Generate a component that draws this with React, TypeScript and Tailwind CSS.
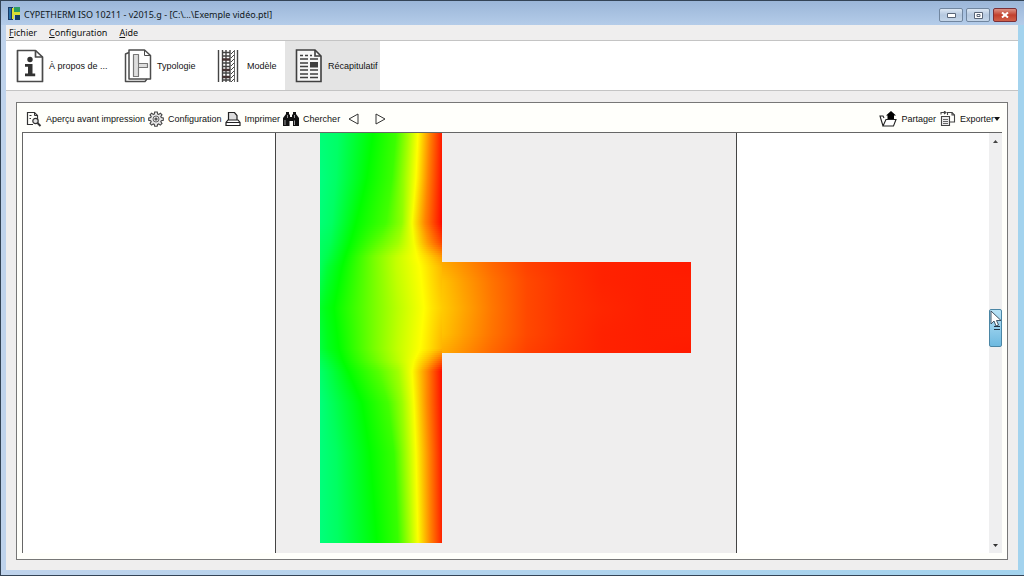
import React from "react";

type Stop = [x: number, hue: number];
type Profile = { y: number; stops: Stop[] };

/* Colour profiles across the wall, from the top edge to the bottom one. */
const WALL: Profile[] = [
  { y: 0, stops: [[0, 148], [18, 144], [53, 120], [76, 106], [88, 82], [98, 60], [110, 31], [122, 6]] },
  { y: 45, stops: [[0, 150], [16, 144], [47, 120], [72, 106], [84, 84], [96, 60], [108, 31], [122, 4]] },
  { y: 90, stops: [[0, 148], [12, 143], [36, 120], [66, 104], [82, 86], [92, 62], [105, 31], [122, 2]] },
  { y: 110, stops: [[0, 144], [10, 140], [30, 120], [58, 98], [78, 82], [94, 62], [108, 36], [122, 16]] },
  { y: 124, stops: [[0, 143], [8, 137], [25, 120], [54, 92], [76, 74], [97, 60], [108, 50], [122, 36]] },
  { y: 134, stops: [[0, 142], [7, 133], [22, 120], [54, 92], [76, 74], [100, 60], [110, 52], [122, 43]] },
  { y: 175, stops: [[0, 130], [6, 125], [14, 120], [54, 92], [78, 76], [104, 60], [112, 54], [122, 48]] },
  { y: 216, stops: [[0, 135], [8, 127], [19, 120], [54, 92], [78, 74], [100, 60], [110, 52], [122, 42]] },
  { y: 228, stops: [[0, 141], [10, 132], [23, 120], [54, 96], [78, 76], [94, 61], [108, 42], [122, 20]] },
  { y: 238, stops: [[0, 145], [12, 135], [28, 120], [58, 100], [78, 82], [92, 61], [107, 32], [122, 3]] },
  { y: 270, stops: [[0, 149], [14, 140], [42, 120], [68, 104], [82, 84], [94, 61], [107, 32], [122, 4]] },
  { y: 320, stops: [[0, 149], [16, 143], [50, 120], [74, 107], [85, 84], [96, 61], [109, 32], [122, 6]] },
  { y: 410, stops: [[0, 149], [18, 143], [57, 120], [78, 107], [88, 84], [98, 61], [110, 32], [122, 8]] },
];

/* Colour profiles along the slab that meets the wall. */
const SLAB: Profile[] = [
  { y: 0, stops: [[0, 40], [22, 33], [50, 24], [85, 15], [120, 11], [160, 8], [205, 7], [249, 6]] },
  { y: 20, stops: [[0, 46], [22, 37], [50, 27], [85, 17], [120, 12], [160, 8], [205, 7], [249, 7]] },
  { y: 46, stops: [[0, 48], [22, 39], [50, 28], [85, 17], [120, 12], [160, 9], [205, 7], [249, 7]] },
  { y: 72, stops: [[0, 46], [22, 37], [50, 27], [85, 17], [120, 12], [160, 8], [205, 7], [249, 7]] },
  { y: 92, stops: [[0, 40], [22, 33], [50, 24], [85, 15], [120, 11], [160, 8], [205, 7], [249, 6]] },
];

const BAND = 2;

function profileAt(profiles: Profile[], y: number): Stop[] {
  const next = Math.max(1, profiles.findIndex((p) => p.y >= y));
  const a = profiles[next - 1];
  const b = profiles[next];
  const t = (y - a.y) / (b.y - a.y);
  return a.stops.map(([x, h], i) => [x + (b.stops[i][0] - x) * t, h + (b.stops[i][1] - h) * t]);
}

function Field({ name, profiles, x, y, width, height }: { name: string; profiles: Profile[]; x: number; y: number; width: number; height: number }) {
  const bands = Array.from({ length: Math.ceil(height / BAND) }, (_, i) => i * BAND);
  return (
    <>
      {bands.map((top) => (
        <React.Fragment key={top}>
          <linearGradient id={`${name}-${top}`}>
            {profileAt(profiles, top + 1).map(([at, hue], i) => (
              <stop key={i} offset={at / width} stopColor={`hsl(${hue} 100% 50%)`} />
            ))}
          </linearGradient>
          <rect x={x} y={y + top} width={width} height={Math.min(BAND, height - top)} fill={`url(#${name}-${top})`} />
        </React.Fragment>
      ))}
    </>
  );
}

function ThermalMap() {
  return (
    <svg width="371" height="410" viewBox="0 0 371 410" role="img" aria-label="Températures" className="shrink-0">
      <Field name="wall" profiles={WALL} x={0} y={0} width={122} height={410} />
      <Field name="slab" profiles={SLAB} x={122} y={129} width={249} height={91} />
    </svg>
  );
}

function InfoIcon() {
  return (
    <svg width="28" height="36" viewBox="0 0 28 36" fill="none" stroke="#4a4a4a" strokeWidth="1.7" strokeLinejoin="round">
      <path d="M1.500 2.500h18l7 6.500v24.500h-25z" />
      <path d="M19.500 2.500v6.500h7" />
      <circle cx="14" cy="11.500" r="2.700" fill="#333" stroke="none" />
      <path d="M9 16h7.500v9.500h2.700v2.700H9v-2.700h3v-6.800H9z" fill="#333" stroke="none" />
    </svg>
  );
}

function TypologyIcon() {
  return (
    <svg width="28" height="36" viewBox="0 0 28 36" fill="none" stroke="#4c4c4c" strokeWidth="1.500" strokeLinejoin="round">
      <path d="M5 4.500L1.500 6v27.500H21l2-2.500" />
      <path d="M5 2h15.500l6 5.500V31H5z" />
      <path d="M20.500 2v5.500h6" strokeWidth="1" />
      <path d="M9.500 6.500h5v9h9v4h-9v9h-5z" fill="#dedede" stroke="#777" strokeWidth="1.200" />
      <path d="M14.500 15v5" stroke="#777" strokeWidth="1" />
    </svg>
  );
}

function ModelIcon() {
  return (
    <svg width="22" height="34" viewBox="0 0 22 34" fill="none" stroke="#444" strokeWidth="1.400">
      <path d="M1.500 1v32M5.500 1v32M20.500 1v32" />
      <path d="M9 1v32M13 1v32" />
      <path d="M17.500 1v32" strokeWidth=".8" />
      <path d="M5 3.500h8M5 7h8M5 14h8M5 17.500h8M5 24h8M5 31h8" />
      <path d="M5 10.500h8M5 21h8M5 28h8" stroke="#433" strokeWidth="2.400" />
      <path d="M14 5l3-3M14 9l3-3M14 13l3-3M14 17l3-3M14 21l3-3M14 25l3-3M14 29l3-3M14 33l3-3" strokeWidth="1" />
    </svg>
  );
}

function SummaryIcon() {
  return (
    <svg width="28" height="36" viewBox="0 0 28 36" fill="none" stroke="#3f3f3f" strokeWidth="1.600">
      <path d="M1.500 2H20l6 6v25.500H1.500z" fill="#f6f6f6" />
      <path d="M20 2v6h6" />
      <path d="M5 7.500h3M10 7.500h3M15 7.500h2M5 11h8M15 11h8M5 15h8M5 18.500h8M5 22h8M5 26h8M5 29.500h8M15 22h8M15 26h8M15 29.500h8" />
      <path d="M15 14h8v5.500h-8z" fill="#3f3f3f" stroke="none" />
    </svg>
  );
}

function PreviewIcon() {
  return (
    <svg width="16" height="16" viewBox="0 0 16 16" fill="none" stroke="#333" strokeWidth="1.200">
      <path d="M7 13.500H1.500v-12h7l3 3v4" />
      <path d="M8.500 1.500v3h3M3.500 4.500h2M3.500 7.500h1.500" strokeWidth="1" />
      <circle cx="9.500" cy="10" r="2.700" fill="#e4e4e4" />
      <path d="M11.500 12l3 3" strokeWidth="2" />
    </svg>
  );
}

function GearIcon() {
  return (
    <svg width="16" height="16" viewBox="0 0 16 16" fill="none" stroke="#444" strokeWidth="1.100">
      <path d="M6.700 1h2.600l.4 2 1 .4 1.700-1.200 1.600 1.600-1.200 1.800.5 1 2 .4v2.300l-2 .4-.5 1 1.200 1.800-1.700 1.600-1.700-1.200-1 .4-.4 2H6.700l-.4-2-1-.4-1.700 1.200L2 12.500l1.200-1.800-.5-1-2-.4V7l2-.4.5-1L2 3.800l1.600-1.600 1.700 1.200 1-.4z" fill="#e6e6e6" />
      <circle cx="8" cy="8" r="3" strokeWidth=".8" />
      <circle cx="8" cy="8" r="1" />
    </svg>
  );
}

function PrinterIcon() {
  return (
    <svg width="16" height="16" viewBox="0 0 16 16" fill="none" stroke="#222" strokeWidth="1.200">
      <path d="M3.500 9V1.500h6l2.500 3V9" fill="#ddd" />
      <path d="M3 9h10l2 2.500v3H1v-3zM1 11.500h14" fill="#fff" />
    </svg>
  );
}

function BinocularsIcon() {
  return (
    <svg width="16" height="16" viewBox="0 0 16 16" fill="#111">
      <path d="M3 1h3v2l1 1v2h2V4l1-1V1h3v2l3 4v8h-6v-5H6.500v5H0V7l3-4z" />
      <path d="M2 9v5M4.500 4v3M11.500 9.500V14M11.500 4v3" stroke="#bbb" strokeWidth=".8" />
    </svg>
  );
}

function ShareIcon() {
  return (
    <svg width="18" height="16" viewBox="0 0 18 16" fill="none" stroke="#222" strokeWidth="1.100">
      <path d="M4 15L1 5h3l1 2M4 15L7 8.500h10L14.500 15z" fill="#fff" />
      <path d="M12 0l5 4.500h-2V8H8.500V4.500H7z" fill="#000" stroke="none" />
    </svg>
  );
}

function ExportIcon() {
  return (
    <svg width="16" height="16" viewBox="0 0 16 16" fill="none" stroke="#444" strokeWidth="1.100">
      <path d="M7.500 4V1.500h4.500l2.500 2.500v7H10" />
      <path d="M12 1.500V4h2.500" />
      <path d="M1.500 5.500h8v9h-8z" fill="#eee" />
      <path d="M3 8.500h5M3 10.500h5M3 12.500h5" strokeWidth=".8" />
      <path d="M1 3.500V1.500h4M4 0l2 1.500L4 3" />
    </svg>
  );
}

function AppLogo() {
  return (
    <svg width="12" height="13" viewBox="0 0 12 13">
      <path d="M0 0h5v13H0z" fill="#183a68" />
      <path d="M1 1h2v11H1z" fill="#2870a8" />
      <path d="M6 0h6v6H6z" fill="#2a9b62" />
      <path d="M4 1h2v4h6v3H6v4H4z" fill="#d8df35" />
      <path d="M7 8h5v5H7z" fill="#153e63" />
    </svg>
  );
}

function MainTab({ icon, label, active, className }: { icon: React.ReactNode; label: string; active?: boolean; className: string }) {
  return (
    <button type="button" aria-pressed={!!active} className={`flex h-full items-center whitespace-nowrap ${active ? "bg-[#e4e4e4]" : ""} ${className}`}>
      {icon}
      <span>{label}</span>
    </button>
  );
}

function Tool({ icon, label, className = "" }: { icon: React.ReactNode; label: string; className?: string }) {
  return (
    <button type="button" className={`flex items-center gap-1 whitespace-nowrap ${className}`}>
      {icon}
      <span>{label}</span>
    </button>
  );
}

function TitleBar() {
  const box = "flex h-3.5 w-6 items-center justify-center rounded-xs border border-[#71869f] bg-linear-to-b from-[#dce7f3] via-[#b5c8df] to-[#c4d5e8]";
  return (
    <header className="flex h-6 shrink-0 items-center gap-1 bg-linear-to-b from-[#9bb6d8] to-[#b4cce9] pr-[7px] pl-[7px] font-['Noto_Sans',sans-serif] text-[9px] text-[#101820]">
      <AppLogo />
      <h1 className="flex-1 pt-1 whitespace-nowrap">CYPETHERM ISO 10211 - v2015.g - [C:\...\Exemple vidéo.ptl]</h1>
      <div className="flex gap-[3px] pt-1">
        <button type="button" aria-label="Réduire" className={box}>
          <svg width="9" height="5"><path d="M.5.5h8v4h-8z" fill="#fff" stroke="#5a6678" /></svg>
        </button>
        <button type="button" aria-label="Agrandir" className={box}>
          <svg width="9" height="7"><path d="M.5.5h8v6h-8zM3 2.500h3v2H3z" fill="#fff" stroke="#5a6678" /></svg>
        </button>
        <button type="button" aria-label="Fermer" className="flex h-3.5 w-6 items-center justify-center rounded-xs border border-[#7b3038] bg-linear-to-b from-[#dc9186] via-[#c2402e] to-[#d0604a]">
          <svg width="8" height="6"><path d="M1 .5l6 5M7 .5l-6 5" stroke="#fff" strokeWidth="2" /></svg>
        </button>
      </div>
    </header>
  );
}

function ScrollBar() {
  return (
    <div className="flex w-[13px] shrink-0 flex-col items-center justify-between bg-[#efeff0]">
      <button type="button" aria-label="Vers le haut" className="flex h-4 w-full items-center justify-center">
        <svg width="5" height="3"><path d="M0 3l2.500-3L5 3z" fill="#444" /></svg>
      </button>
      <div className="flex w-full flex-1 flex-col">
        <div className="flex-[160]" />
        <div className="relative h-[38px] w-full rounded-xs border border-[#4b86a5] bg-linear-to-b from-[#b9e3f6] to-[#6db9e0]">
          <svg width="12" height="22" viewBox="0 0 12 22" className="absolute top-0 left-0">
            <path d="M4 16.500h6M4 19.500h6" stroke="#234" />
            <path d="M1 1v13l3-3 2 5 2.500-1-2-4.500H11z" fill="#fff" stroke="#345" strokeWidth=".9" />
          </svg>
        </div>
        <div className="flex-[191]" />
      </div>
      <button type="button" aria-label="Vers le bas" className="flex h-4 w-full items-center justify-center">
        <svg width="5" height="3"><path d="M0 0l2.500 3L5 0z" fill="#333" /></svg>
      </button>
    </div>
  );
}

export default function App() {
  return (
    <div className="flex h-screen flex-col overflow-hidden border border-r-0 border-[#344456] bg-linear-to-r from-[#bfd3ec] to-[#a3d3ee] font-['Liberation_Sans',Arial,sans-serif] text-[9px] leading-3 text-[#111]">
      <TitleBar />
      <div className="mr-[6px] mb-[5px] ml-[5px] flex min-h-0 flex-1 flex-col bg-[#efeeee]">
        <nav className="flex h-[15px] shrink-0 items-center gap-3 px-[3px] font-['Noto_Sans',sans-serif]">
          <button type="button"><u>F</u>ichier</button>
          <button type="button"><u>C</u>onfiguration</button>
          <button type="button"><u>A</u>ide</button>
        </nav>
        <div className="flex h-[51px] shrink-0 items-center border-y border-[#c4c4c4] bg-white">
          <MainTab className="w-[108px] gap-[5px] pl-2.5" icon={<InfoIcon />} label="À propos de ..." />
          <MainTab className="w-[94px] gap-[5px] pl-2.5" icon={<TypologyIcon />} label="Typologie" />
          <MainTab className="w-[77px] gap-2 pl-[9px]" icon={<ModelIcon />} label="Modèle" />
          <MainTab className="w-[95px] gap-[5px] pl-2.5" icon={<SummaryIcon />} label="Récapitulatif" active />
        </div>
        <main className="mx-[10px] mt-[11px] mb-[10px] flex min-h-0 flex-1 flex-col border border-[#777] bg-[#fffffb] px-[5px] pb-[6px]">
          <div className="flex h-[29px] shrink-0 items-center pt-[3px] pr-0.5 pl-1">
            <Tool className="mr-[3px]" icon={<PreviewIcon />} label="Aperçu avant impression" />
            <Tool className="mr-[3px]" icon={<GearIcon />} label="Configuration" />
            <Tool className="mr-[3px]" icon={<PrinterIcon />} label="Imprimer" />
            <Tool className="mr-2" icon={<BinocularsIcon />} label="Chercher" />
            <button type="button" aria-label="Précédent" className="mr-4">
              <svg width="11" height="12" fill="none" stroke="#333"><path d="M10 1v10L1 6z" /></svg>
            </button>
            <button type="button" aria-label="Suivant">
              <svg width="11" height="12" fill="none" stroke="#333"><path d="M1 1v10l9-5z" /></svg>
            </button>
            <Tool className="mr-1 ml-auto" icon={<ShareIcon />} label="Partager" />
            <button type="button" className="flex items-center gap-1">
              <ExportIcon />
              <span className="flex items-center">
                Exporter
                <svg width="6" height="4"><path d="M0 0h6L3 4z" fill="#111" /></svg>
              </span>
            </button>
          </div>
          <section className="flex min-h-0 flex-1 border-t border-l border-[#666] bg-white">
            <div className="flex min-w-0 flex-1 justify-center overflow-hidden">
              <article className="w-[462px] shrink-0 border-x border-[#444] bg-[#efeeee] pl-[44px]">
                <ThermalMap />
              </article>
            </div>
            <ScrollBar />
          </section>
        </main>
      </div>
    </div>
  );
}
